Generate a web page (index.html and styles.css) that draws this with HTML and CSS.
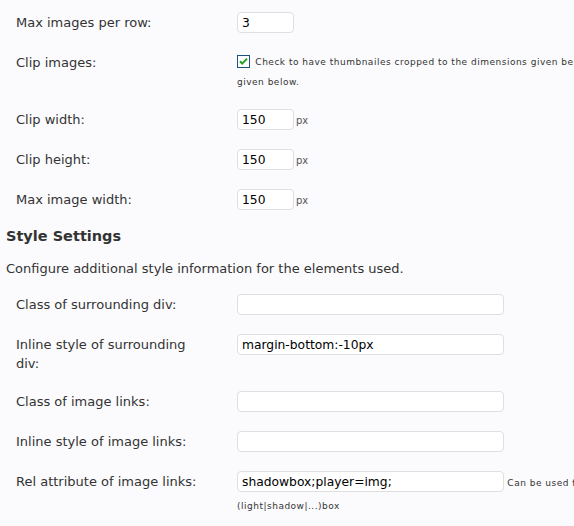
FILE: index.html
```html
<!DOCTYPE html>
<html>
<head>
    <link rel="stylesheet" href="styles.css">
</head>
<body>
    <div class="wrap">
        <table class="form-table">
            <tr>
                <th>Max images per row:</th>
                <td><input type="text" class="small-text" value="3"></td>
            </tr>
            <tr>
                <th>Clip images:</th>
                <td class="check-cell">
                    <label class="desc">
                        <svg class="checkbox" width="13" height="13" viewBox="0 0 13 13">
                            <rect x="0.5" y="0.5" width="12" height="12" fill="#fff" stroke="#1c5180"/>
                            <path d="M3 6.2 L5.2 8.6 L10 3.6" fill="none" stroke="#21a121" stroke-width="2"/>
                        </svg>
                        Check to have thumbnailes cropped to the dimensions given below, otherwise they are scaled to fit the dimensions<br>given below.
                    </label>
                </td>
            </tr>
            <tr>
                <th>Clip width:</th>
                <td><input type="text" class="small-text" value="150"><span class="unit">px</span></td>
            </tr>
            <tr>
                <th>Clip height:</th>
                <td><input type="text" class="small-text" value="150"><span class="unit">px</span></td>
            </tr>
            <tr>
                <th>Max image width:</th>
                <td><input type="text" class="small-text" value="150"><span class="unit">px</span></td>
            </tr>
        </table>

        <h3>Style Settings</h3>
        <p class="intro">Configure additional style information for the elements used.</p>

        <table class="form-table">
            <tr>
                <th>Class of surrounding div:</th>
                <td><input type="text" class="regular-text" value=""></td>
            </tr>
            <tr>
                <th>Inline style of surrounding div:</th>
                <td><input type="text" class="regular-text" value="margin-bottom:-10px"></td>
            </tr>
            <tr>
                <th>Class of image links:</th>
                <td><input type="text" class="regular-text" value=""></td>
            </tr>
            <tr>
                <th>Inline style of image links:</th>
                <td><input type="text" class="regular-text" value=""></td>
            </tr>
            <tr>
                <th>Rel attribute of image links:</th>
                <td class="rel-cell"><input type="text" class="regular-text" value="shadowbox;player=img;"><span class="desc"> Can be used to open the images in a lightbox script, e.g. shadowbox or<br>(light|shadow|...)box</span></td>
            </tr>
        </table>
    </div>
</body>
</html>
```

FILE: styles.css
```css
html {
    overflow: hidden;
}

body {
    margin: 0;
    background-color: #fbfbfd;
    color: #333;
    font-family: "DejaVu Sans", Verdana, sans-serif;
    font-size: 13px;
}

.wrap {
    width: 900px;
    padding: 2px 6px 0 6px;
}

.form-table {
    border-collapse: collapse;
    border-spacing: 0;
}

.form-table th {
    width: 190px;
    padding: 11px 21px 8px 10px;
    text-align: left;
    font-weight: normal;
    vertical-align: top;
    line-height: 19px;
}

.form-table td {
    padding: 10px 10px 9px 10px;
    vertical-align: top;
    line-height: 21px;
}

input[type="text"] {
    box-sizing: border-box;
    height: 21px;
    margin: 0;
    padding: 0 4px;
    border: 1px solid #dfdfdf;
    border-radius: 4px;
    background-color: #fff;
    color: #000;
    font-family: "DejaVu Sans", Verdana, sans-serif;
    font-size: 12.3px;
    vertical-align: top;
}

.small-text {
    width: 57px;
}

.regular-text {
    width: 267px;
}

.unit {
    margin-left: 2px;
    font-size: 10px;
    line-height: 1;
    color: #555;
}

.desc {
    font-size: 9px;
    letter-spacing: 0.5px;
    color: #333;
}

.check-cell {
    line-height: 20px !important;
    padding-bottom: 7px !important;
}

.check-cell .desc {
    display: block;
    line-height: 20px;
}

.checkbox {
    vertical-align: -3px;
    margin-right: 2px;
}

h3 {
    margin: 8px 0 0 0;
    font-size: 14.5px;
    line-height: 18px;
    font-weight: bold;
}

.intro {
    margin: 15px 0 6px 0;
    line-height: 18px;
}

.rel-cell {
    line-height: 22px !important;
}

.rel-cell .desc {
    line-height: 22px;
}
```
